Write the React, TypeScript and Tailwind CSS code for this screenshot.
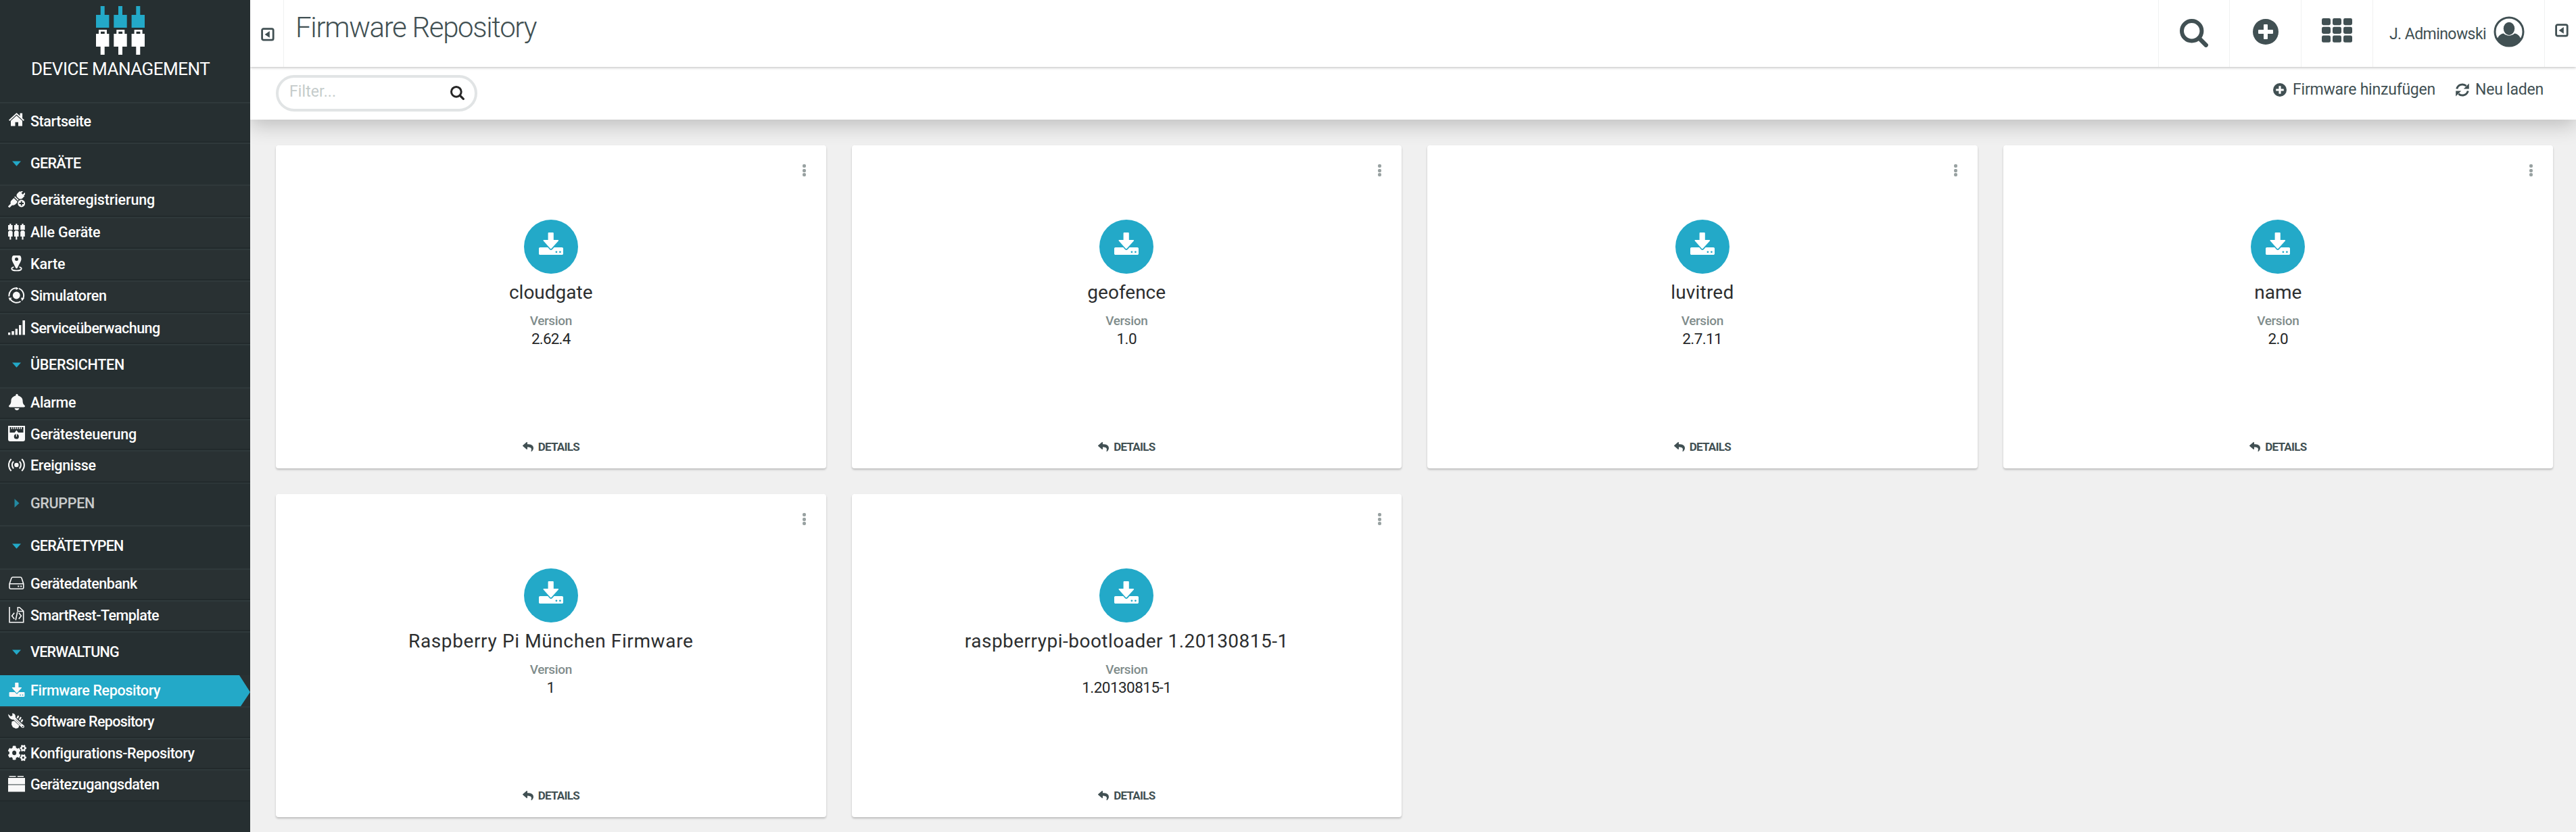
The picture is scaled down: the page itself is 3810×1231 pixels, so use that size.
import React from 'react'
import { FaBell, FaCogs, FaReply } from 'react-icons/fa'

type IconProps = { className?: string }

function DownloadIcon({ className }: IconProps) {
  return (
    <svg viewBox="0 0 36 33" className={className} fill="currentColor">
      <path d="M14.6 0h6.2a1 1 0 0 1 1 1v10h6.4c1 0 1.2.8.6 1.5L18.8 23.6a1.4 1.4 0 0 1-2.1 0L6.9 12.500c-.7-.8-.3-1.500.6-1.500h6.100V1a1 1 0 0 1 1-1z" />
      <path
        fillRule="evenodd"
        d="M1.800 22h11.400l2.700 3.100a2.600 2.600 0 0 0 4 0L22.600 22h11.600c1 0 1.800.8 1.800 1.800v7.400c0 1-.8 1.800-1.800 1.800H1.800C.8 33 0 32.200 0 31.200v-7.400C0 22.800.8 22 1.800 22zM25.900 27.400a1.400 1.400 0 1 0 .01 2.800a1.400 1.400 0 0 0-.01-2.800zM31.400 27.400a1.400 1.400 0 1 0 .01 2.800a1.400 1.400 0 0 0-.01-2.800z"
      />
    </svg>
  )
}

function HomeIcon() {
  return (
    <svg viewBox="0 0 25 24" className="h-6 w-[25px]" fill="currentColor">
      <path d="M12.500 2 17.500 6.600V2.400h3.600v7.500L24 12.600l-1.300 1.300L12.500 4.500 2.300 13.900 1 12.600z" />
      <path d="M12.500 6 21 13.800v7.700h-6v-5.700h-4.500v5.700H4v-7.700z" />
    </svg>
  )
}

function RegisterIcon() {
  return (
    <svg viewBox="0 0 25 24" className="h-6 w-[25px]" fill="currentColor">
      <g transform="rotate(45 12 12)">
        <path d="M8.500-4h2.200v4h3V-4H16V0h1.400v5c0 2-1.600 3.600-3.600 3.600h-3.100c-2 0-3.600-1.600-3.600-3.600V0h1.400zM7.500 10h9.400v1.700H7.500zM8 13h8.400v5c0 2-1.300 3.700-2.700 4.200V28h-3v-5.800C9.300 21.700 8 20 8 18z" />
      </g>
      <circle cx="19.700" cy="18" r="6.700" fill="#293133" />
      <circle cx="19.700" cy="18" r="5.400" />
      <path d="M18.800 14.800h1.900v2.300H23V19h-2.300v2.300h-1.900V19h-2.300v-1.900h2.300z" fill="#293133" />
    </svg>
  )
}

function DevicesIcon() {
  return (
    <svg viewBox="0 0 25 24" className="h-6 w-[25px]" fill="currentColor">
      {[0, 9, 18.200].map((x) => (
        <g key={x} transform={`translate(${x} 0)`}>
          <path d="M2.200 0h2.200v2H6.600v7H0V2h2.200zM1 10h4.600v1.500h1V19H4.400v4.500H2.200V19H0v-7.500h1z" />
        </g>
      ))}
    </svg>
  )
}

function MapIcon() {
  return (
    <svg viewBox="0 0 25 24" className="h-6 w-[25px]" fill="currentColor">
      <path
        fillRule="evenodd"
        d="M8 0h9c1.500 0 2.500 2.500 2.500 5 0 4-3.500 8-5.700 13.500-.5 1-2.100 1-2.600 0C9 13 5.500 9 5.500 5 5.500 2.500 6.500 0 8 0zm4.500 3a2.500 2.500 0 1 0 0 5 2.500 2.500 0 0 0 0-5z"
      />
      <path d="M8.500 17.200c-2 .4-3.200 1.200-3.200 2.200 0 1.700 3.200 3 7.200 3s7.200-1.300 7.200-3c0-1-1.200-1.800-3.200-2.200" fill="none" stroke="currentColor" strokeWidth="1.800" />
    </svg>
  )
}

function SimulatorIcon() {
  return (
    <svg viewBox="0 0 25 24" className="h-6 w-[25px]">
      <circle cx="12.300" cy="12" r="5.400" fill="currentColor" />
      <g fill="none" stroke="currentColor" strokeWidth="2">
        <path d="M1.500 13.500A10.800 10.800 0 0 1 12.500 1.200" />
        <path d="M16 1.900A10.800 10.800 0 0 1 21.600 17.500" />
        <path d="M18.500 21A10.800 10.800 0 0 1 3.500 18" />
      </g>
      <g fill="currentColor">
        <path d="M12-.5 15.500 2 11.500 4z" />
        <path d="M24 16 20.500 20.500 19 15.500z" />
        <path d="M.5 15.500 5.500 15.500 2.500 20z" />
      </g>
    </svg>
  )
}

function SignalIcon() {
  return (
    <svg viewBox="0 0 25 24" className="h-6 w-[25px]" fill="currentColor">
      <path d="M0 19h3.200v3.500H0zM5.300 17h3.500v5.500H5.300zM10.600 13.500H14v9h-3.400zM16 8h3.400v14.500H16zM21.400 1H25v21.500h-3.600z" />
    </svg>
  )
}

function ControlIcon() {
  return (
    <svg viewBox="0 0 25 24" className="h-6 w-[25px]" fill="currentColor">
      <path fillRule="evenodd" d="M0 0h25v20a3 3 0 0 1-3 3H3a3 3 0 0 1-3-3zM2.500 2v8h7.200l2.600-3.600L15 10h7.500V2zM12.300 12.300a3.600 3.600 0 1 0 .01 7.200 3.600 3.600 0 0 0-.01-7.200z" />
      <path d="M4.800 2h1.200v3H4.800zM7.600 2h1.200v3H7.600zM10.400 2h1.200v3h-1.200zM13.200 2h1.200v3h-1.200zM16 2h1.200v3H16zM18.800 2H20v3h-1.200z" />
      <path d="M11.800 12h1.200v4h-1.200z" />
    </svg>
  )
}

function EventsIcon() {
  return (
    <svg viewBox="0 0 25 24" className="h-6 w-[25px]" fill="none" stroke="currentColor" strokeWidth="2.100">
      <circle cx="12.400" cy="12" r="3.200" fill="currentColor" stroke="none" />
      <path d="M8 6.800a7.500 7.500 0 0 0 0 10.400M16.800 6.800a7.500 7.500 0 0 1 0 10.400M4.600 3.200a12.400 12.400 0 0 0 0 17.600M20.200 3.200a12.400 12.400 0 0 1 0 17.600" />
    </svg>
  )
}

function DriveIcon() {
  return (
    <svg viewBox="0 0 25 24" className="h-6 w-[25px]" fill="none" stroke="currentColor" strokeWidth="1.600">
      <path d="M2 13 5 4.300a2 2 0 0 1 1.900-1.300h11.200A2 2 0 0 1 20 4.300L22.800 13v5.600a1.600 1.600 0 0 1-1.600 1.600H3.600A1.600 1.600 0 0 1 2 18.600zM2 12.800h20.800" />
      <path d="M14.300 15.600h2v2h-2zM18.200 15.600h2v2h-2z" fill="currentColor" stroke="none" />
    </svg>
  )
}

function CodeFileIcon() {
  return (
    <svg viewBox="0 0 25 24" className="h-6 w-[25px]" fill="none" stroke="currentColor" strokeWidth="1.600">
      <path d="M2 0v22.800h20.700V6L16.500.5h-2.200v6h8" />
      <path d="M9.200 8.800 5.600 13.300l3.600 4.500M15.800 8.800l3.600 4.500-3.600 4.500M13.700 7.500l-2.500 12" />
    </svg>
  )
}

function ToolsIcon() {
  return (
    <svg viewBox="0 0 25 24" className="h-6 w-[25px]" fill="currentColor">
      <path d="M0 1.500 4 5 6.500 3.500 6 .5C9.500.2 11.500 3 10.800 6.500L23.500 18.500c1.500 2-.8 4.600-3 3.200L8 9.500C4.500 10.500.5 7 0 1.500z" />
      <path d="M5.500 12.500 9 11.500l7.500 7-1.500 3.500-3.500 1-4.500-2L5 17z" />
      <path d="m12.500 7 1.800-3.500 2 .8-1.500 4zM15.800 9.500l2.200-4 1.900 1.100-2.100 4.500zM18.500 12.500l2-3.500 1.800 1.300-1.800 3.800z" />
      <path d="M11 9.500 19 17.500M13 8.500l8 8" stroke="#293133" strokeWidth=".7" />
      <circle cx="21.600" cy="20.200" r="1" fill="#293133" />
    </svg>
  )
}

function BoxIcon() {
  return (
    <svg viewBox="0 0 25 24" className="h-6 w-[25px]" fill="currentColor">
      <path d="M1.500 0h10v1.600h-10zM13.800 0H23v1.600h-9.200zM0 3h25v20.500H0z" />
      <path d="M0 12h25v1.800H0z" fill="#8a9091" />
    </svg>
  )
}

function ToggleIcon() {
  return (
    <svg viewBox="0 0 20 20" className="size-5 shrink-0 text-[#415053]" fill="none">
      <rect x="1.600" y="1.600" width="16.600" height="16.600" rx="2.200" stroke="currentColor" strokeWidth="2.800" />
      <path d="M12.800 5v9.800L5.600 9.900z" fill="currentColor" />
    </svg>
  )
}

function PlusCircle({ className }: IconProps) {
  return (
    <svg viewBox="0 0 38 38" className={className}>
      <circle cx="19" cy="19" r="19" fill="currentColor" />
      <path d="M17 8h4a1 1 0 0 1 1 1v7h7a1 1 0 0 1 1 1v4a1 1 0 0 1-1 1h-7v7a1 1 0 0 1-1 1h-4a1 1 0 0 1-1-1v-7H9a1 1 0 0 1-1-1v-4a1 1 0 0 1 1-1h7V9a1 1 0 0 1 1-1z" fill="#fff" />
    </svg>
  )
}

function SearchIcon({ className }: IconProps) {
  return (
    <svg viewBox="0 0 42 42" className={className} fill="none" stroke="currentColor">
      <circle cx="17.700" cy="17.700" r="14.700" strokeWidth="6" />
      <path d="M28.500 28.500 38.700 38.700" strokeWidth="6.400" strokeLinecap="round" />
    </svg>
  )
}

function GridIcon() {
  return (
    <svg viewBox="0 0 45 36" className="h-9 w-[45px]" fill="currentColor">
      {[0, 12.800, 25.600].map((y) =>
        [0, 16, 32].map((x) => <rect key={`${x}-${y}`} x={x} y={y} width="13" height="10.200" rx="2.400" />),
      )}
    </svg>
  )
}

function UserIcon() {
  return (
    <svg viewBox="0 0 46 46" className="size-[46px] shrink-0">
      <defs>
        <clipPath id="avatar"><circle cx="23" cy="23" r="21" /></clipPath>
      </defs>
      <circle cx="23" cy="23" r="21" fill="none" stroke="currentColor" strokeWidth="3" />
      <g clipPath="url(#avatar)" fill="currentColor">
        <path d="M5 46V36c1-6 5-10 10-10.500 4.500 4.200 11.500 4.200 16 0C36 26 40 30 41 36v10z" />
        <ellipse cx="23" cy="18.300" rx="8.200" ry="9.600" />
      </g>
    </svg>
  )
}

function ReloadIcon() {
  return (
    <svg viewBox="0 0 20 20" className="size-5" fill="none">
      <path d="M1.800 8.500A8.300 8.300 0 0 1 15.600 4.200M18.200 11.500A8.300 8.300 0 0 1 4.400 15.800" stroke="currentColor" strokeWidth="3" />
      <path d="M19.800.5v8h-8zM.2 19.500v-8h8z" fill="currentColor" />
    </svg>
  )
}

function BrandLogo() {
  return (
    <svg viewBox="0 0 72 72" className="size-[72px]">
      {[0, 26.300, 52.600].map((x) => (
        <g key={x} transform={`translate(${x} 0)`}>
          <path d="M6.700 0h6v13h6.700v19H0V13h6.700z" fill="#23a9c8" />
          <path fillRule="evenodd" d="M4 35h12v6h3.400v19h-6.700v12h-6V60H0V41h4zm3 2.800V41h5.800v-3.200z" fill="#fff" />
        </g>
      ))}
    </svg>
  )
}

type Item = { label: string; track: string; h: string; icon: React.ReactNode; active?: boolean }
type Group = { label: string; track: string; h: string; closed?: boolean; items: Item[] }

const groups: Group[] = [
  {
    label: 'GERÄTE', track: 'tracking-[-0.68px]', h: 'h-[62px]',
    items: [
      { label: 'Geräteregistrierung', track: 'tracking-[-0.14px]', h: 'h-12', icon: <RegisterIcon /> },
      { label: 'Alle Geräte', track: 'tracking-[-0.22px]', h: 'h-[47px]', icon: <DevicesIcon /> },
      { label: 'Karte', track: 'tracking-[-0.12px]', h: 'h-[47px]', icon: <MapIcon /> },
      { label: 'Simulatoren', track: 'tracking-[-0.33px]', h: 'h-12', icon: <SimulatorIcon /> },
      { label: 'Serviceüberwachung', track: 'tracking-[-0.54px]', h: 'h-[46px]', icon: <SignalIcon /> },
    ],
  },
  {
    label: 'ÜBERSICHTEN', track: 'tracking-[-0.27px]', h: 'h-16',
    items: [
      { label: 'Alarme', track: 'tracking-[-0.34px]', h: 'h-[47px]', icon: <FaBell className="mx-auto h-6 w-[24px]" preserveAspectRatio="none" /> },
      { label: 'Gerätesteuerung', track: 'tracking-[-0.24px]', h: 'h-[46px]', icon: <ControlIcon /> },
      { label: 'Ereignisse', track: 'tracking-[-0.31px]', h: 'h-12', icon: <EventsIcon /> },
    ],
  },
  { label: 'GRUPPEN', track: 'tracking-[-0.3px]', h: 'h-[63px]', closed: true, items: [] },
  {
    label: 'GERÄTETYPEN', track: 'tracking-[-0.8px]', h: 'h-16',
    items: [
      { label: 'Gerätedatenbank', track: 'tracking-[-0.47px]', h: 'h-[47px]', icon: <DriveIcon /> },
      { label: 'SmartRest-Template', track: 'tracking-[-0.52px]', h: 'h-[46px]', icon: <CodeFileIcon /> },
    ],
  },
  {
    label: 'VERWALTUNG', track: 'tracking-[-0.74px]', h: 'h-[65px]',
    items: [
      { label: 'Firmware Repository', track: 'tracking-[-0.34px]', h: 'h-[46px]', icon: <DownloadIcon className="h-[21px] w-6" />, active: true },
      { label: 'Software Repository', track: 'tracking-[-0.64px]', h: 'h-[47px]', icon: <ToolsIcon /> },
      { label: 'Konfigurations-Repository', track: 'tracking-[-0.37px]', h: 'h-[46px]', icon: <FaCogs className="-mr-0.5 h-6 w-[27px] shrink-0" preserveAspectRatio="none" /> },
      { label: 'Gerätezugangsdaten', track: 'tracking-[-0.52px]', h: 'h-12', icon: <BoxIcon /> },
    ],
  },
]

function NavItem({ item }: { item: Item }) {
  return (
    <div className={`bg-[#293133] ${item.active ? '' : 'border-t-2 border-b-2 border-t-[#2f393b] border-b-[#222a2c]'} ${item.h}`}>
      <div
        className={`flex h-full items-start text-white ${
          item.active
            ? 'bg-[#23a9c8] pt-[7px] [clip-path:polygon(0_0,354px_0,370px_25px,356px_100%,0_100%)]'
            : 'pt-[5px]'
        }`}
      >
        <span className="-mt-px ml-3 flex h-[31px] w-[25px] items-center justify-center text-[#f8f8f8]">{item.icon}</span>
        <span className={`ml-2 text-[21.5px] leading-[31px] font-medium whitespace-nowrap ${item.track}`}>{item.label}</span>
      </div>
    </div>
  )
}

function Sidebar() {
  return (
    <aside className="z-20 flex h-full w-[370px] shrink-0 flex-col overflow-hidden bg-[#262f31]">
      <div className="flex h-[151px] flex-col pt-[9px]">
        <div className="flex w-[356px] justify-center"><BrandLogo /></div>
        <div className="mt-[5px] pl-[46px] text-[26px] leading-8 tracking-[-0.5px] whitespace-nowrap text-white">DEVICE MANAGEMENT</div>
      </div>
      <div className="flex h-[60px] items-start border-t-2 border-b-2 border-t-[#2f393b] border-b-[#222a2c] pt-[11px] text-white">
        <span className="-mt-[3px] ml-3 flex h-[31px] w-[25px] items-center text-[#f8f8f8]"><HomeIcon /></span>
        <span className="ml-2 text-[21.5px] leading-[31px] font-medium tracking-[-0.42px]">Startseite</span>
      </div>
      {groups.map((g) => (
        <React.Fragment key={g.label}>
          <div className={`flex items-start border-t-2 border-t-[#2f393b] pt-[13px] ${g.h} ${g.closed ? 'opacity-75' : ''}`}>
            <span className="ml-3 flex h-[31px] w-[25px] items-center justify-center text-[#23a9c8]">
              {g.closed ? (
                <svg viewBox="0 0 8 13" className="h-[13px] w-2" fill="currentColor"><path d="M.5 0 7.500 6.500.5 13z" /></svg>
              ) : (
                <svg viewBox="0 0 13 8" className="h-2 w-[13px]" fill="currentColor"><path d="M0 .5h13L6.500 7.800z" /></svg>
              )}
            </span>
            <span className={`ml-2 text-[21.5px] leading-[31px] font-medium whitespace-nowrap text-white ${g.track}`}>{g.label}</span>
          </div>
          {g.items.map((it) => <NavItem key={it.label} item={it} />)}
        </React.Fragment>
      ))}
    </aside>
  )
}

function Header() {
  return (
    <header className="z-10 flex h-[99px] shrink-0 bg-white text-[#415053] shadow-[0_1px_4px_rgba(0,0,0,0.28)]">
      <div className="w-[50px] border-r border-[#f0f1f1] pt-[41px] pl-4"><ToggleIcon /></div>
      <h1 className="pt-[11px] pl-[17px] text-[42px] leading-[60px] font-light tracking-[-1.33px]">Firmware Repository</h1>
      <div className="ml-auto flex">
        <div className="flex w-[105px] justify-center border-l border-[#f0f1f1] pt-7"><SearchIcon className="size-[42px]" /></div>
        <div className="flex w-[106px] justify-center border-l border-[#f0f1f1] pt-7"><PlusCircle className="size-[38px]" /></div>
        <div className="flex w-[106px] justify-center border-l border-[#f0f1f1] pt-[27px]"><GridIcon /></div>
        <div className="flex w-[254px] border-l border-[#f0f1f1] pl-6">
          <span className="w-[154px] pt-[35px] text-[23px] leading-8 tracking-[-0.57px] whitespace-nowrap">J. Adminowski</span>
          <span className="pt-6"><UserIcon /></span>
        </div>
        <div className="w-[47px] border-l border-[#f0f1f1] pt-[35px] pl-[15px]"><ToggleIcon /></div>
      </div>
    </header>
  )
}

function Toolbar() {
  return (
    <div className="flex h-[78px] shrink-0 justify-between bg-white pr-12 pl-[38px] shadow-[0_8px_30px_rgba(0,0,0,0.22)]">
      <div className="mt-3 flex h-[54px] w-[298px] justify-between rounded-full border-4 border-[#e1e4e5] pr-[15px] pl-4">
        <span className="text-[23px] leading-[41px] tracking-[0.1px] text-[#c5cccb]">Filter...</span>
        <SearchIcon className="mt-3 size-[21px] text-[#262626]" />
      </div>
      <div className="flex items-start pt-[18px] text-[23px] leading-8 tracking-[-0.22px] text-[#415053]">
        <PlusCircle className="mt-[6px] size-5" />
        <span className="ml-[9px]">Firmware hinzufügen</span>
        <span className="mt-[6px] ml-[30px]"><ReloadIcon /></span>
        <span className="ml-[9px]">Neu laden</span>
      </div>
    </div>
  )
}

const cards = [
  { name: 'cloudgate', track: 'tracking-normal', version: '2.62.4', vtrack: 'tracking-[-0.8px]' },
  { name: 'geofence', track: 'tracking-normal', version: '1.0', vtrack: 'tracking-[-0.6px]' },
  { name: 'luvitred', track: 'tracking-[0.2px]', version: '2.7.11', vtrack: 'tracking-[-0.6px]' },
  { name: 'name', track: 'tracking-normal', version: '2.0', vtrack: 'tracking-[-0.6px]' },
  { name: 'Raspberry Pi München Firmware', track: 'tracking-[0.62px]', version: '1', vtrack: 'tracking-normal' },
  { name: 'raspberrypi-bootloader 1.20130815-1', track: 'tracking-[0.48px]', version: '1.20130815-1', vtrack: 'tracking-[-0.55px]' },
]

function Card({ name, track, version, vtrack }: (typeof cards)[number]) {
  return (
    <article className="relative flex h-[478px] flex-col items-center rounded-[4px] bg-white pt-[110px] pb-5 shadow-[0_2px_3px_rgba(0,0,0,0.22)]">
      <div className="absolute top-7 right-[30px] flex w-[5px] flex-col gap-[1.500px]">
        <i className="h-[5px] rounded-[2px] bg-[#98a1a1]" />
        <i className="h-[5px] rounded-[2px] bg-[#98a1a1]" />
        <i className="h-[5px] rounded-[2px] bg-[#98a1a1]" />
      </div>
      <div className="flex size-20 justify-center rounded-full bg-[#23a9c8] pt-[19px] text-white">
        <DownloadIcon className="h-[33px] w-9" />
      </div>
      <h2 className={`mt-2 text-[28px] leading-10 text-[#2c2e2f] ${track}`}>{name}</h2>
      <div className="mt-[10px] text-[19px] leading-6 font-medium tracking-[-0.36px] text-[#7f8c8b]">Version</div>
      <div className={`text-[22.5px] leading-7 text-[#262829] ${vtrack}`}>{version}</div>
      <div className="mt-auto flex items-center gap-[7px] text-[17px] leading-6 font-bold tracking-[-0.75px] text-[#415053]">
        <FaReply className="size-4" />
        DETAILS
      </div>
    </article>
  )
}

export default function App() {
  return (
    <div className="flex h-[1231px] w-[3810px] overflow-hidden bg-[#f0f0f0] font-['Roboto',sans-serif]">
      <Sidebar />
      <div className="flex min-w-0 flex-1 flex-col">
        <Header />
        <Toolbar />
        <main className="grid grid-cols-4 gap-[38px] pt-[38px] pr-[34px] pl-[38px]">
          {cards.map((c) => <Card key={c.name} {...c} />)}
        </main>
      </div>
    </div>
  )
}
